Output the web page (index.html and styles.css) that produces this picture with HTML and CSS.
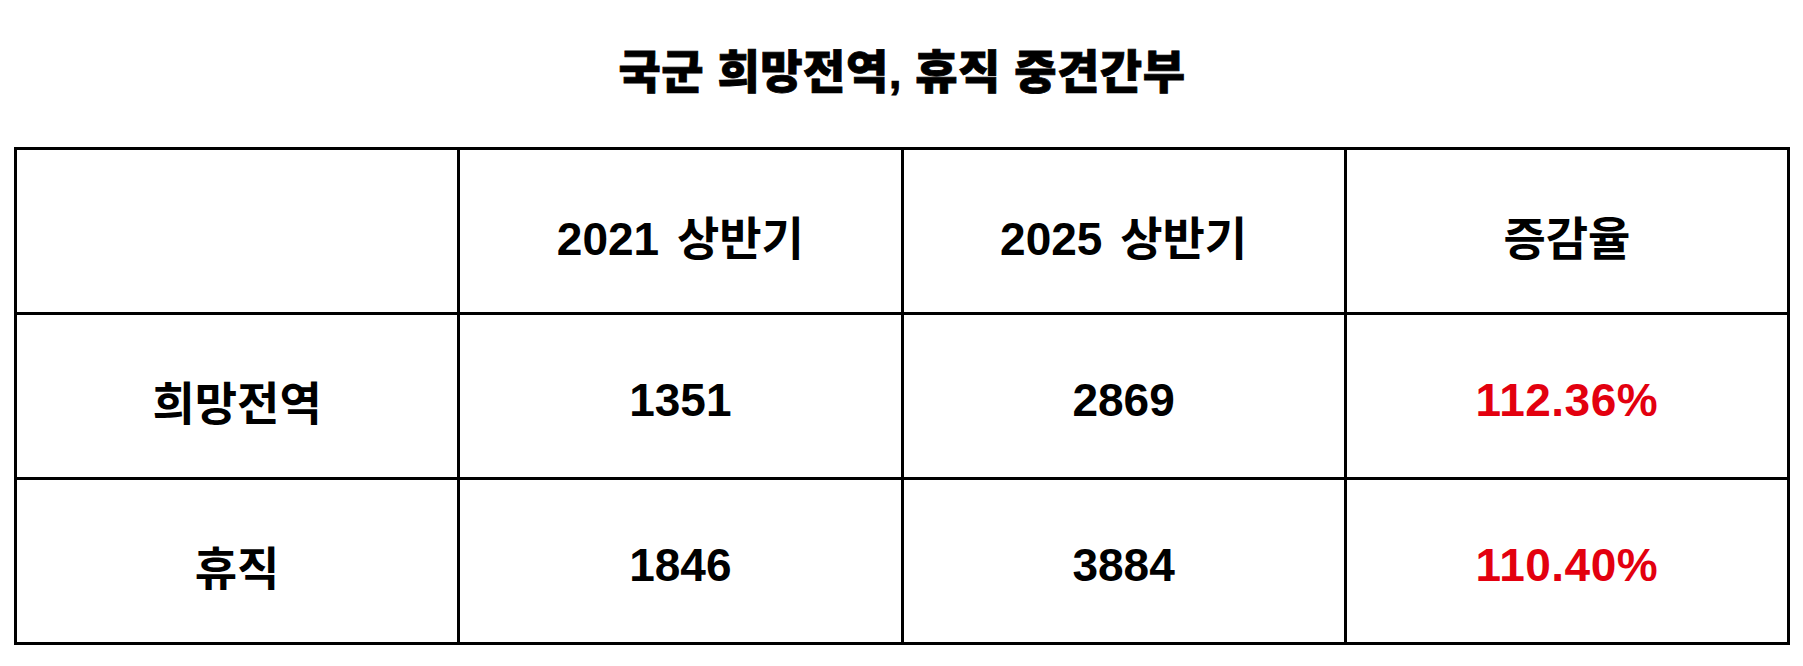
FILE: index.html
```html
<!DOCTYPE html>
<html lang="ko">
<head>
<meta charset="utf-8">
<title>국군 희망전역, 휴직 중견간부</title>
<link rel="stylesheet" href="styles.css">
</head>
<body>
<div class="page">
  <h1 class="title">국군 희망전역, 휴직 중견간부</h1>
  <div class="grid">
    <div class="cell"></div>
    <div class="cell">2021 상반기</div>
    <div class="cell">2025 상반기</div>
    <div class="cell">증감율</div>
    <div class="cell">희망전역</div>
    <div class="cell">1351</div>
    <div class="cell">2869</div>
    <div class="cell red">112.36%</div>
    <div class="cell">휴직</div>
    <div class="cell">1846</div>
    <div class="cell">3884</div>
    <div class="cell red">110.40%</div>
  </div>
</div>
</body>
</html>
```
FILE: styles.css
```css
html, body {
  margin: 0;
  padding: 0;
  background: #fff;
}
.page {
  width: 1803px;
  height: 666px;
  padding: 0 13px 0 14px;
  box-sizing: border-box;
  font-family: "Liberation Sans", "Noto Sans CJK KR", sans-serif;
  color: #000;
}
.title {
  margin: 0;
  height: 147px;
  box-sizing: border-box;
  padding-top: 44px;
  font-size: 46px;
  line-height: 56px;
  font-weight: 900;
  letter-spacing: 0.5px;
  -webkit-text-stroke: 0.8px #000;
  text-align: center;
}
.grid {
  display: grid;
  grid-template-columns: repeat(4, 1fr);
  grid-template-rows: repeat(3, 162px);
  gap: 3px;
  padding: 3px;
  background: #000;
}
.cell {
  background: #fff;
  display: flex;
  align-items: center;
  justify-content: center;
  font-size: 46px;
  font-weight: 700;
  word-spacing: 5px;
  padding-top: 8px;
  box-sizing: border-box;
}
.red {
  color: #e3000f;
  letter-spacing: 0.5px;
  -webkit-text-stroke: 0 transparent;
}
```
